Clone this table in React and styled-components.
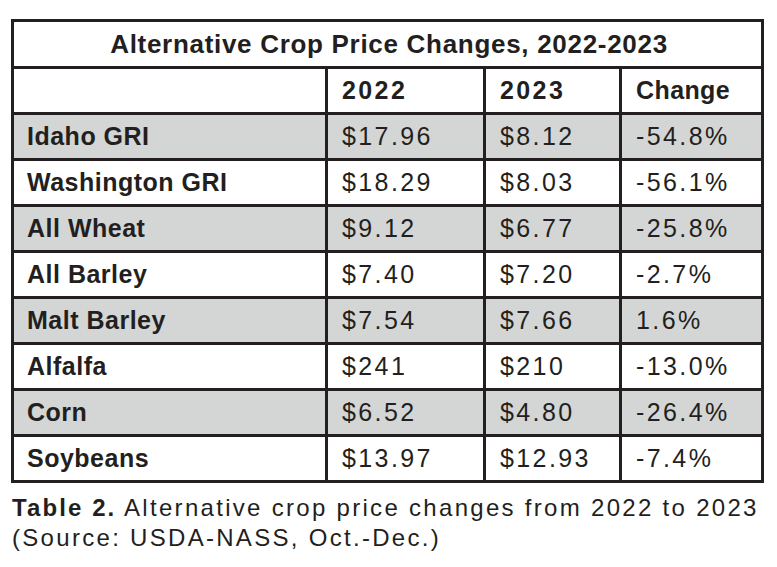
import React from "react";
import styled, { createGlobalStyle } from "styled-components";

const Global = createGlobalStyle`
  html, body { margin: 0; padding: 0; background: #ffffff; }
  body { font-family: "Liberation Sans", Arial, sans-serif; color: #231f20; }
`;

const Page = styled.div`
  padding: 19px 0 0 11px;
  width: 777px;
  box-sizing: border-box;
`;

const Table = styled.div`
  display: grid;
  grid-template-columns: 311px 155px 133px 139px;
  grid-template-rows: 44px repeat(9, 43px);
  gap: 3px;
  padding: 3px;
  width: 753px;
  box-sizing: border-box;
  background: #231f20;
`;

const TitleCell = styled.div`
  grid-column: 1 / -1;
  background: #ffffff;
  display: flex;
  align-items: center;
  justify-content: center;
  font-weight: 700;
  font-size: 26px;
  letter-spacing: 0.7px;
  padding-left: 3px;
`;

const Cell = styled.div`
  background: ${(p) => (p.$shade ? "#d3d6d4" : "#ffffff")};
  display: flex;
  align-items: center;
  padding-left: ${(p) => (p.$label ? "13px" : "14px")};
  padding-bottom: 1px;
  font-size: 25px;
  font-weight: ${(p) => (p.$bold ? 700 : 400)};
  letter-spacing: ${(p) => p.$spacing || "2.4px"};
  white-space: nowrap;
`;

const Caption = styled.p`
  margin: 10px 0 0 1px;
  font-size: 24px;
  line-height: 30px;
  letter-spacing: 2.3px;
  width: 766px;
  white-space: nowrap;
`;

const Strong = styled.span`
  font-weight: 700;
  letter-spacing: 2.1px;
`;

const rows = [
  ["Idaho GRI", "$17.96", "$8.12", "-54.8%"],
  ["Washington GRI", "$18.29", "$8.03", "-56.1%"],
  ["All Wheat", "$9.12", "$6.77", "-25.8%"],
  ["All Barley", "$7.40", "$7.20", "-2.7%"],
  ["Malt Barley", "$7.54", "$7.66", "1.6%"],
  ["Alfalfa", "$241", "$210", "-13.0%"],
  ["Corn", "$6.52", "$4.80", "-26.4%"],
  ["Soybeans", "$13.97", "$12.93", "-7.4%"],
];

export default function App() {
  return (
    <Page>
      <Global />
      <Table>
        <TitleCell>Alternative Crop Price Changes, 2022-2023</TitleCell>
        <Cell />
        <Cell $bold>2022</Cell>
        <Cell $bold>2023</Cell>
        <Cell $bold $spacing="0.4px">Change</Cell>
        {rows.map((r, i) => {
          const shade = i % 2 === 0;
          return (
            <React.Fragment key={r[0]}>
              <Cell $shade={shade} $bold $label $spacing="0.5px">{r[0]}</Cell>
              <Cell $shade={shade}>{r[1]}</Cell>
              <Cell $shade={shade}>{r[2]}</Cell>
              <Cell $shade={shade}>{r[3]}</Cell>
            </React.Fragment>
          );
        })}
      </Table>
      <Caption>
        <Strong>Table 2.</Strong> Alternative crop price changes from 2022 to 2023
        <br />
        (Source: USDA-NASS, Oct.-Dec.)
      </Caption>
    </Page>
  );
}
